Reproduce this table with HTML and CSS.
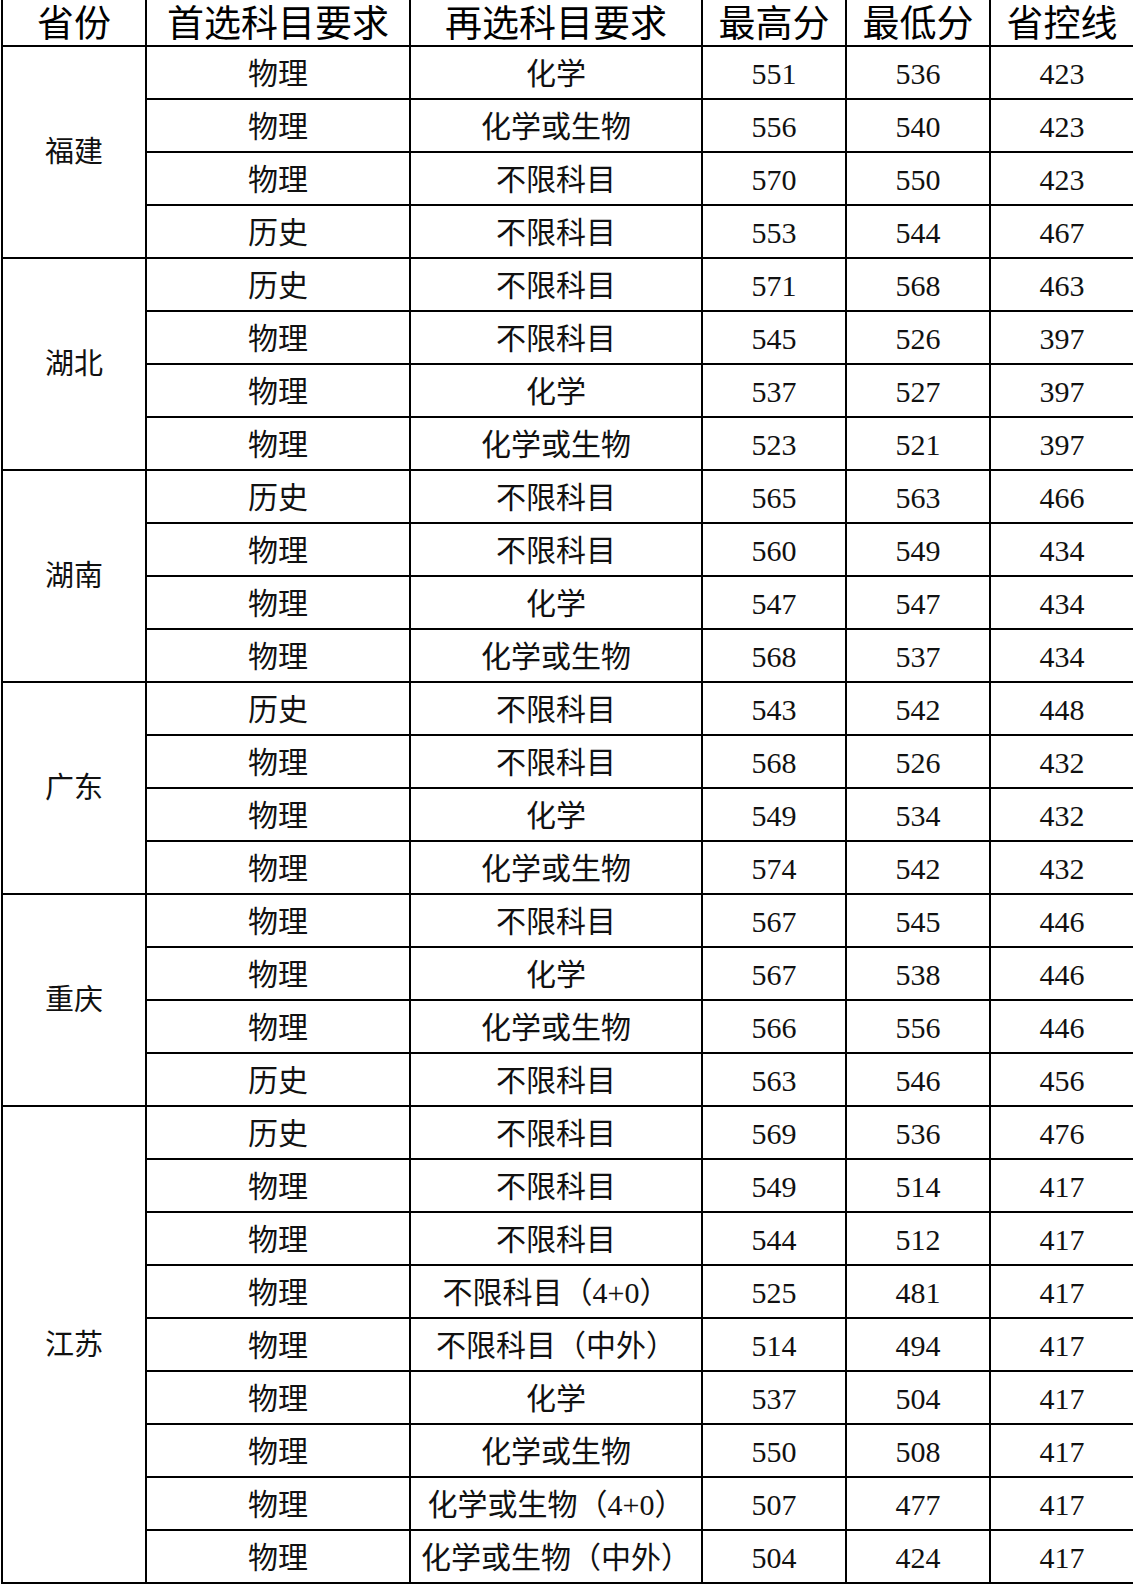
FILE: index.html
```html
<!DOCTYPE html>
<html lang="zh-CN">
<head>
<meta charset="utf-8">
<title>选科成绩表</title>
<link rel="stylesheet" href="styles.css">
</head>
<body>
<table class="scores">
<colgroup>
<col class="c-prov"><col class="c-first"><col class="c-second"><col class="c-num"><col class="c-num"><col class="c-num-last">
</colgroup>
<thead>
<tr class="head"><th>省份</th><th>首选科目要求</th><th>再选科目要求</th><th>最高分</th><th>最低分</th><th>省控线</th></tr>
</thead>
<tbody>
<tr><td rowspan="4" class="prov">福建</td><td>物理</td><td>化学</td><td>551</td><td>536</td><td>423</td></tr>
<tr><td>物理</td><td>化学或生物</td><td>556</td><td>540</td><td>423</td></tr>
<tr><td>物理</td><td>不限科目</td><td>570</td><td>550</td><td>423</td></tr>
<tr><td>历史</td><td>不限科目</td><td>553</td><td>544</td><td>467</td></tr>
<tr><td rowspan="4" class="prov">湖北</td><td>历史</td><td>不限科目</td><td>571</td><td>568</td><td>463</td></tr>
<tr><td>物理</td><td>不限科目</td><td>545</td><td>526</td><td>397</td></tr>
<tr><td>物理</td><td>化学</td><td>537</td><td>527</td><td>397</td></tr>
<tr><td>物理</td><td>化学或生物</td><td>523</td><td>521</td><td>397</td></tr>
<tr><td rowspan="4" class="prov">湖南</td><td>历史</td><td>不限科目</td><td>565</td><td>563</td><td>466</td></tr>
<tr><td>物理</td><td>不限科目</td><td>560</td><td>549</td><td>434</td></tr>
<tr><td>物理</td><td>化学</td><td>547</td><td>547</td><td>434</td></tr>
<tr><td>物理</td><td>化学或生物</td><td>568</td><td>537</td><td>434</td></tr>
<tr><td rowspan="4" class="prov">广东</td><td>历史</td><td>不限科目</td><td>543</td><td>542</td><td>448</td></tr>
<tr><td>物理</td><td>不限科目</td><td>568</td><td>526</td><td>432</td></tr>
<tr><td>物理</td><td>化学</td><td>549</td><td>534</td><td>432</td></tr>
<tr><td>物理</td><td>化学或生物</td><td>574</td><td>542</td><td>432</td></tr>
<tr><td rowspan="4" class="prov">重庆</td><td>物理</td><td>不限科目</td><td>567</td><td>545</td><td>446</td></tr>
<tr><td>物理</td><td>化学</td><td>567</td><td>538</td><td>446</td></tr>
<tr><td>物理</td><td>化学或生物</td><td>566</td><td>556</td><td>446</td></tr>
<tr><td>历史</td><td>不限科目</td><td>563</td><td>546</td><td>456</td></tr>
<tr><td rowspan="9" class="prov">江苏</td><td>历史</td><td>不限科目</td><td>569</td><td>536</td><td>476</td></tr>
<tr><td>物理</td><td>不限科目</td><td>549</td><td>514</td><td>417</td></tr>
<tr><td>物理</td><td>不限科目</td><td>544</td><td>512</td><td>417</td></tr>
<tr><td>物理</td><td>不限科目（4+0）</td><td>525</td><td>481</td><td>417</td></tr>
<tr><td>物理</td><td>不限科目（中外）</td><td>514</td><td>494</td><td>417</td></tr>
<tr><td>物理</td><td>化学</td><td>537</td><td>504</td><td>417</td></tr>
<tr><td>物理</td><td>化学或生物</td><td>550</td><td>508</td><td>417</td></tr>
<tr><td>物理</td><td>化学或生物（4+0）</td><td>507</td><td>477</td><td>417</td></tr>
<tr><td>物理</td><td>化学或生物（中外）</td><td>504</td><td>424</td><td>417</td></tr>
</tbody>
</table>
</body>
</html>
```

FILE: styles.css
```css
html, body {
  margin: 0;
  padding: 0;
  background: #fff;
}

.scores {
  border-collapse: collapse;
  table-layout: fixed;
  width: 1133px;
  margin-left: 1px;
  font-family: "Liberation Serif", "Noto Sans CJK SC", serif;
  color: #111;
}

.c-prov { width: 144px; }
.c-first { width: 264px; }
.c-second { width: 292px; }
.c-num { width: 144px; }
.c-num-last { width: 144px; }

.scores th,
.scores td {
  border: 2px solid #000;
  padding: 0;
  text-align: center;
  vertical-align: middle;
  white-space: nowrap;
  overflow: hidden;
}

.scores th {
  border-top: none;
  height: 41px;
  padding-top: 4px;
  font-size: 37px;
  font-weight: 400;
  line-height: 40px;
  color: #000;
}

.scores td {
  height: 48px;
  padding-top: 3px;
  font-size: 30px;
  line-height: 40px;
}

.scores td.prov {
  padding-top: 0;
  font-size: 29px;
}
```
